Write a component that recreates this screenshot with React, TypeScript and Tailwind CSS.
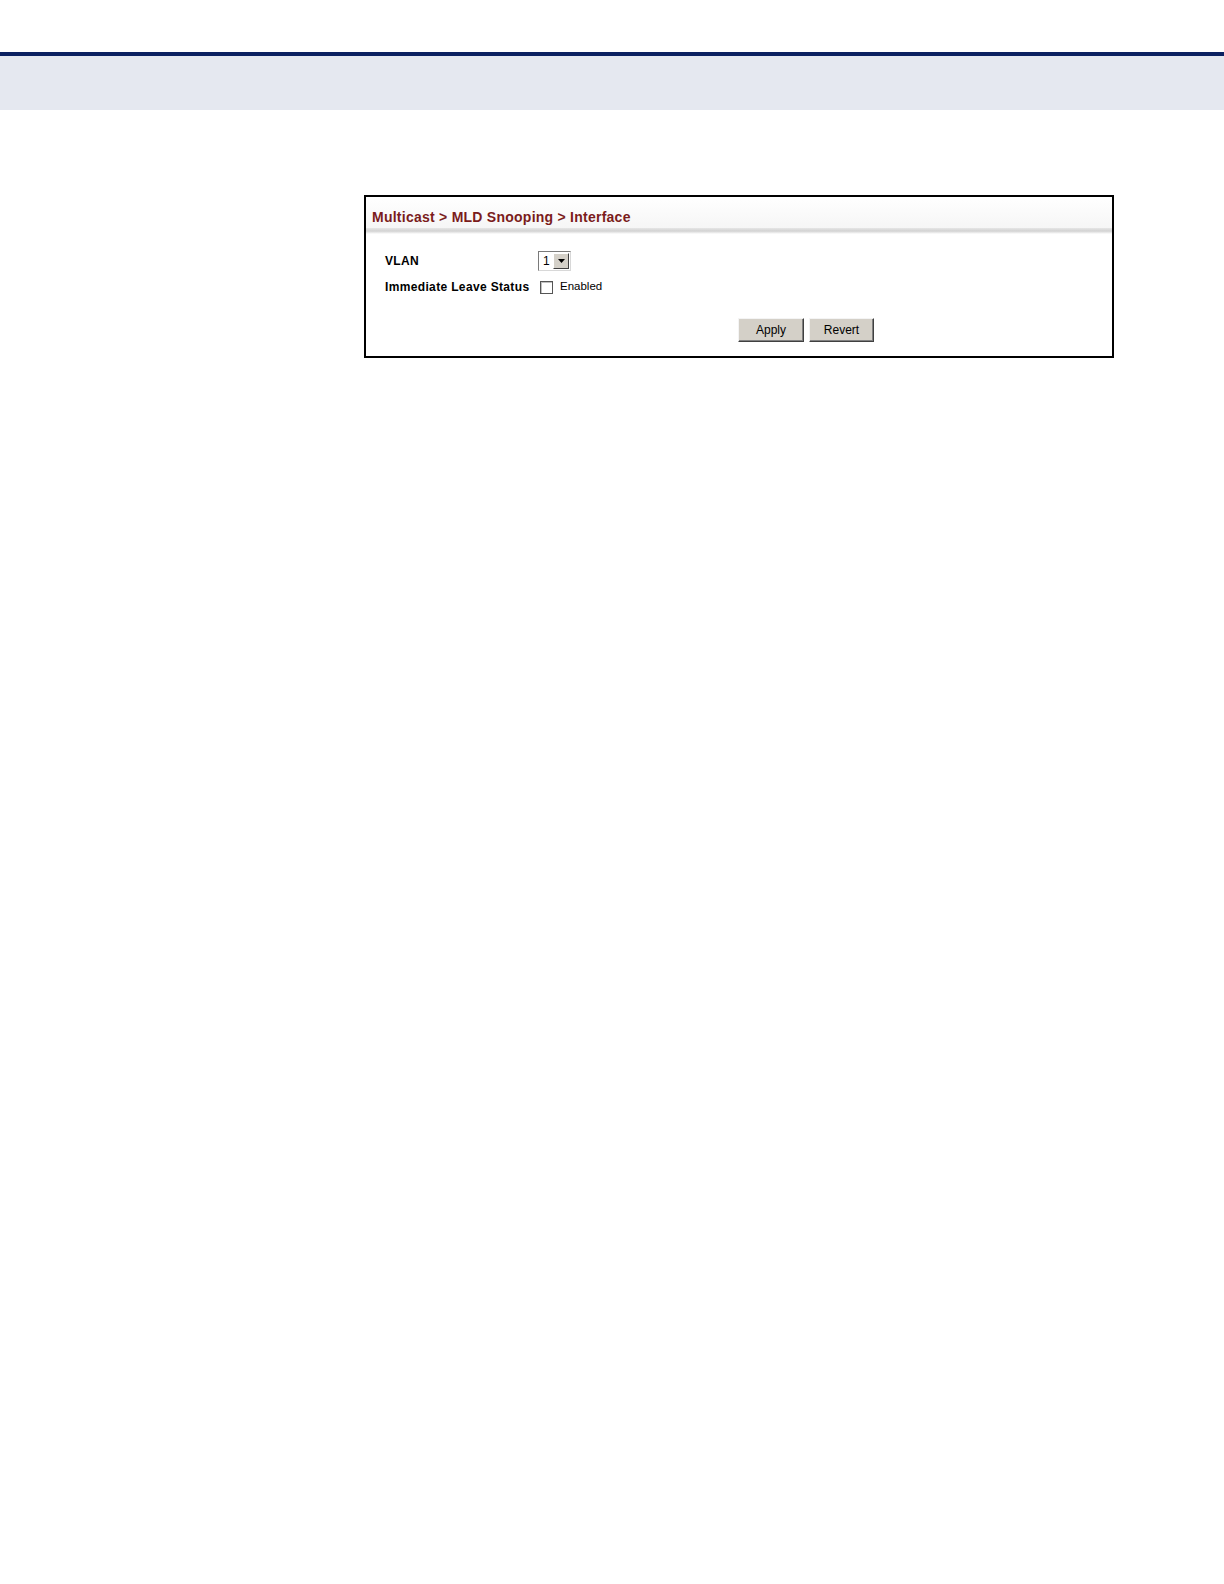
import React from "react";

export default function App() {
  const font = { fontFamily: '"Liberation Sans", Arial, sans-serif' };
  return (
    <div className="w-[1224px] min-h-[1584px] bg-white" style={font}>
      <div className="h-[52px]" />
      <div className="h-[4px] bg-[#0b2161]" />
      <div className="h-[54px] bg-[#e5e8f0]" />
      <div className="pt-[85px] pl-[364px]">
        <div className="w-[750px] h-[163px] border-2 border-black bg-white flex flex-col">
          <div className="h-[31px] pl-[6px] flex items-end pb-[3px] bg-gradient-to-b from-white to-[#f6f6f6]">
            <span className="text-[14px] font-bold text-[#7b1c1c] leading-[16px] tracking-[0.25px]">
              Multicast &gt; MLD Snooping &gt; Interface
            </span>
          </div>
          <div className="h-[6px] bg-gradient-to-b from-[#e6e6e6] via-[#d2d2d2] to-white" />
          <div className="pl-[19px] pt-[17px] flex flex-col gap-[6px]">
            <div className="flex items-center h-[20px]">
              <div className="w-[153px] text-[12px] font-bold text-black tracking-[0.35px]">VLAN</div>
              <div className="flex items-stretch h-[20px] w-[33px] border border-[#7a7a7a] border-r-[#d8d8d8] border-b-[#d8d8d8] bg-white">
                <div className="flex-1 text-[12px] leading-[18px] pl-[4px] text-black">1</div>
                <div className="w-[16px] my-[1px] mr-[1px] bg-[#d4d0c8] border border-t-white border-l-white border-r-[#404040] border-b-[#404040] flex items-center justify-center">
                  <svg width="7" height="4" viewBox="0 0 7 4">
                    <path d="M0 0 H7 L3.5 4 Z" fill="#000" />
                  </svg>
                </div>
              </div>
            </div>
            <div className="flex items-center h-[20px]">
              <div className="w-[155px] text-[12px] font-bold text-black whitespace-nowrap tracking-[0.35px]">Immediate Leave Status</div>
              <div className="w-[13px] h-[13px] border border-[#555] bg-white shadow-[inset_1px_1px_0_#c0c0c0]" />
              <span className="ml-[7px] text-[11.5px] text-black">Enabled</span>
            </div>
          </div>
          <div className="mt-[21px] pl-[372px] flex gap-[5px]">
            <button className="w-[66px] h-[24px] bg-[#d4d0c8] border border-t-[#f4f4f4] border-l-[#f4f4f4] border-r-[#404040] border-b-[#404040] text-[12px] text-black shadow-[inset_-1px_-1px_0_#808080]">
              Apply
            </button>
            <button className="w-[65px] h-[24px] bg-[#d4d0c8] border border-t-[#f4f4f4] border-l-[#f4f4f4] border-r-[#404040] border-b-[#404040] text-[12px] text-black shadow-[inset_-1px_-1px_0_#808080]">
              Revert
            </button>
          </div>
        </div>
      </div>
    </div>
  );
}
